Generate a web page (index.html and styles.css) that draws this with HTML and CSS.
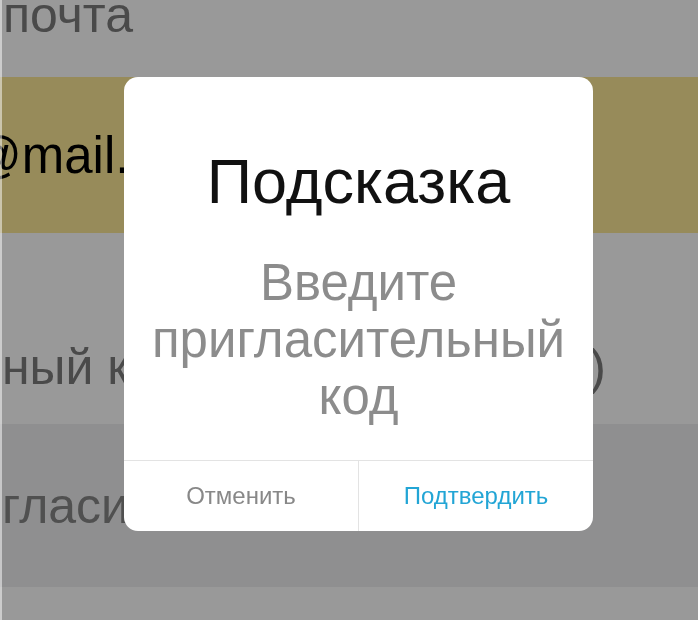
FILE: index.html
```html
<html>
<head>
<meta http-equiv="Content-Type" content="text/html; charset=utf-8">
<title>Регистрация</title>
<link rel="stylesheet" href="styles.css">
</head>

<body>
<div id="reg-form">
	<div class="field">
		<div class="field-label label-mail">почта</div>
		<div class="field-input input-filled">@mail.ru</div>
	</div>
	<div class="field">
		<div class="field-label label-invite"><span>ный к</span><span class="label-tail">)</span></div>
		<div class="field-input input-empty">гласи</div>
	</div>
	<div class="field-rest"></div>
</div>

<div class="mask"></div>
<div class="dialog">
	<div class="dialog-body">
		<div class="dialog-title">Подсказка</div>
		<div class="dialog-text">Введите пригласительный код</div>
	</div>
	<div class="dialog-btns">
		<a href="#" class="btn-cancel">Отменить</a>
		<a href="#" class="btn-ok">Подтвердить</a>
	</div>
</div>
</body>
</html>
```

FILE: styles.css
```css
body{
	margin:0;
	background:#fff;
	font-family:"Liberation Sans", Arial, sans-serif;
	overflow:hidden;
}
#reg-form{
	width:698px;
}
.field-label{
	display:flex;
	align-items:flex-end;
	font-size:50px;
	color:#7c7c7c;
	white-space:nowrap;
	overflow:hidden;
}
.label-mail{
	height:44px;
	padding:0 0 33px 3px;
}
.label-invite{
	height:163px;
	padding:0 0 28px 2px;
}
.label-tail{
	margin-left:auto;
	padding-right:92px;
}
.field-input{
	display:flex;
	align-items:center;
	font-size:51px;
	white-space:nowrap;
	overflow:hidden;
}
.input-filled{
	height:156px;
	background:#fce896;
	color:#000;
	text-indent:-30px;
}
.input-empty{
	height:163px;
	padding-left:2px;
	font-size:50px;
	background:#eeeff0;
	color:#858585;
}
.field-rest{
	height:40px;
}
.mask{
	position:fixed;
	left:0;
	top:0;
	right:0;
	bottom:0;
	border-left:2px solid rgba(255,255,255,.5);
	background:rgba(0,0,0,.4);
	z-index:1;
}
.dialog{
	position:absolute;
	left:124px;
	top:77px;
	width:469px;
	background:#fff;
	border-radius:14px;
	overflow:hidden;
	z-index:2;
}
.dialog-body{
	padding:68px 10px 35px;
	text-align:center;
}
.dialog-title{
	font-size:63px;
	line-height:72px;
	color:#111;
}
.dialog-text{
	margin-top:37px;
	font-size:51px;
	line-height:57px;
	color:#8c8c8c;
}
.dialog-btns{
	display:flex;
	height:70px;
	border-top:1px solid #e3e3e3;
}
.dialog-btns a{
	flex:1;
	display:flex;
	align-items:center;
	justify-content:center;
	font-size:24px;
	text-decoration:none;
}
.btn-cancel{
	color:#888;
	border-right:1px solid #e3e3e3;
}
.btn-ok{
	color:#22a5d5;
}
```
